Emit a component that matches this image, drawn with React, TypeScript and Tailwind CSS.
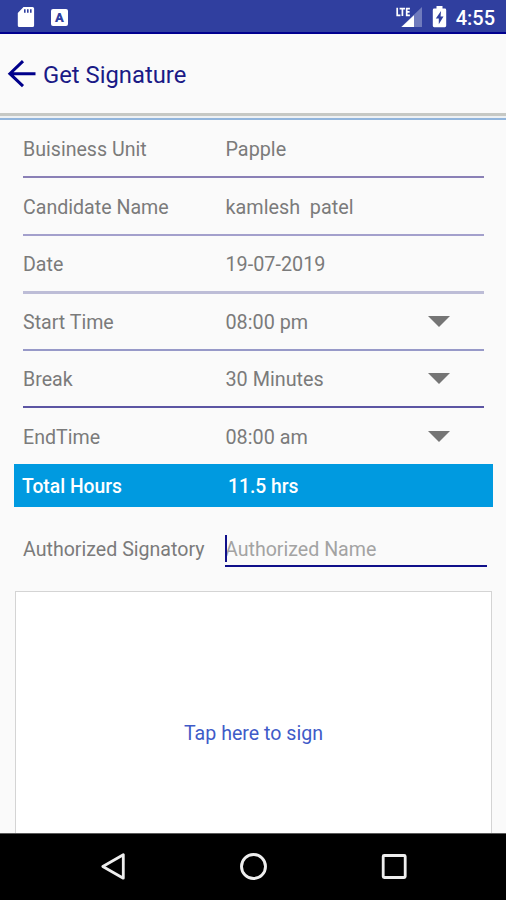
import { useState } from 'react'

const rows = [
  { label: 'Buisiness Unit', value: 'Papple', size: 'h-[58px]', line: 'h-[2px] bg-[#8a80b6]' },
  { label: 'Candidate Name', value: 'kamlesh  patel', size: 'h-[58px]', line: 'h-[2px] bg-[#a3a0cc]' },
  { label: 'Date', value: '19-07-2019', size: 'h-[58px]', line: 'h-[3px] bg-[#bdbdd7]' },
  { label: 'Start Time', value: '08:00 pm', select: true, size: 'h-[57px]', line: 'h-[2px] bg-[#9799c8]' },
  { label: 'Break', value: '30 Minutes', select: true, size: 'h-[57px]', line: 'h-[2px] bg-[#5c55a3]' },
  { label: 'EndTime', value: '08:00 am', select: true, size: 'h-[56px]', line: 'h-0' },
]

function StatusBar() {
  return (
    <div className="flex h-[34px] shrink-0 items-center border-b-2 border-[#00008f] bg-[#303f9f] pt-[3px] pr-[11px] pl-[17px] text-white">
      <svg className="mb-[1px] h-[22px] w-[18px]" viewBox="0 0 18 22">
        <path fill="#fff" d="M6.5 1H15.5a1.6 1.6 0 0 1 1.6 1.6v16.8a1.6 1.6 0 0 1-1.6 1.6H2.4a1.6 1.6 0 0 1-1.6-1.6V7z" />
        <path stroke="#303f9f" strokeWidth="1.6" d="M7.8 3.3v3.4M10.8 3.3v3.4M13.8 3.3v3.4" />
      </svg>
      <div className="mb-[1px] ml-[16px] flex h-[17px] w-[17px] items-center justify-center rounded-[2px] bg-white text-[13px] leading-none font-black text-[#303f9f]">
        A
      </div>
      <div className="flex-1" />
      <svg className="h-[22px] w-[26px]" viewBox="0 0 26 22">
        <path fill="#707bbd" d="M26 0v20H5z" />
        <path fill="#303f9f" d="M0 0h15v10.5H0z" />
        <path fill="#fff" d="M18 8.2V20H5.5z" />
        <path fill="none" stroke="#fff" strokeWidth="1.7" d="M1.2.8v7.5h3.2M3.6 1.6H9M6.400 1.600v7.500M13.900 1.600h-3.200v6.700h3.200M10.700 4.900h2.900" />
      </svg>
      <svg className="mb-[1px] ml-[10px] h-[22px] w-[15px]" viewBox="0 0 15 22">
        <path fill="#fff" d="M4.5 0h6v2.5h2.3A1.4 1.4 0 0 1 14.2 3.9V19.8A1.4 1.4 0 0 1 12.8 21.2H2.2A1.4 1.4 0 0 1 .8 19.8V3.9A1.4 1.4 0 0 1 2.2 2.5H4.5z" />
        <path fill="#303f9f" d="M9 5 3.8 12.500h3v5.700L11.500 10.500H8.600z" />
      </svg>
      <span className="ml-[9px] text-[20px] leading-none font-medium">4:55</span>
    </div>
  )
}

function Header() {
  return (
    <header className="flex h-[79px] shrink-0 items-center pl-[7px] text-[#1a1a86]">
      <svg className="h-[28px] w-[30px]" viewBox="0 0 30 28" fill="none" stroke="#00008b" strokeWidth="3">
        <path d="M28.5 13.7H3M16 1.2 2.9 13.7 16 26.2" />
      </svg>
      <h1 className="ml-[6px] pt-[5px] text-[23.8px] leading-none">Get Signature</h1>
    </header>
  )
}

function NavigationBar() {
  return (
    <nav className="flex h-[67px] shrink-0 items-center justify-between border-t border-[#5a5a5a] bg-black pr-[98px] pl-[100px]">
      <svg className="h-[30px] w-[26px]" viewBox="0 0 26 30" fill="none" stroke="#eee" strokeWidth="2.8">
        <path d="M23.3 2.8v23.4L2.8 14.5z" strokeLinejoin="round" />
      </svg>
      <svg className="h-[30px] w-[30px]" viewBox="0 0 30 30" fill="none" stroke="#eee" strokeWidth="2.9">
        <circle cx="15.5" cy="14.5" r="12" />
      </svg>
      <svg className="h-[30px] w-[28px]" viewBox="0 0 28 30" fill="none" stroke="#eee" strokeWidth="2.8">
        <rect x="3.2" y="3.5" width="22" height="22" rx="1" />
      </svg>
    </nav>
  )
}

export default function App() {
  const [name, setName] = useState('')

  return (
    <div className="flex h-[900px] w-[506px] flex-col overflow-hidden bg-[#fafafa] font-['Roboto',sans-serif] text-[#7b7b7b]">
      <StatusBar />
      <Header />
      <div className="h-[3px] shrink-0 bg-[#c6c8c4]" />
      <div className="h-[2px] shrink-0 bg-[#eef1f3]" />
      <div className="h-[2px] shrink-0 bg-[#92b5dc]" />

      <main className="flex min-h-0 flex-1 flex-col text-[19.6px]">
        {/* Timesheet details */}
        <div className="pr-[22px] pl-[23px]">
          {rows.map((row) => (
            <div key={row.label} className={`flex flex-col ${row.size}`}>
              <div className="flex flex-1 items-center pt-[1px]">
                <span className="w-[202.5px] pt-[2px]">{row.label}</span>
                <span className="flex-1 pt-[2px] text-[19.8px] whitespace-pre">{row.value}</span>
                {row.select && (
                  <svg className="mr-[34px] h-[12px] w-[22px]" viewBox="0 0 22 12">
                    <path fill="#757575" d="M0 0h22L11 11z" />
                  </svg>
                )}
              </div>
              <div className={row.line} />
            </div>
          ))}
        </div>

        {/* Total */}
        <div className="mr-[13px] ml-[14.4px] flex h-[42.5px] shrink-0 items-center bg-[#009ae0] pt-[5px] pl-[7.6px] text-[19.3px] font-medium text-white">
          <span className="w-[206px]">Total Hours</span>
          <span>11.5 hrs</span>
        </div>

        {/* Signatory */}
        <div className="mt-[24.5px] flex h-[36px] shrink-0 pr-[19px] pl-[23px]">
          <label htmlFor="signatory" className="w-[202px] pt-[4px]">
            Authorized Signatory
          </label>
          <div className="relative flex-1 border-b-2 border-[#10108a]">
            <input
              id="signatory"
              className="h-[36px] w-full outline-none placeholder:text-[#a3a3a3]"
              placeholder="Authorized Name"
              value={name}
              onChange={(e) => setName(e.target.value)}
            />
            <span className="absolute top-[4px] left-0 h-[27px] w-[2px] bg-[#10108a]" />
          </div>
        </div>

        <button className="mt-[24px] mr-[14px] ml-[15px] flex-1 border border-b-0 border-[#d4d4d4] bg-white pt-[42px] text-[#3f5bc8]">
          Tap here to sign
        </button>
      </main>
      <NavigationBar />
    </div>
  )
}
